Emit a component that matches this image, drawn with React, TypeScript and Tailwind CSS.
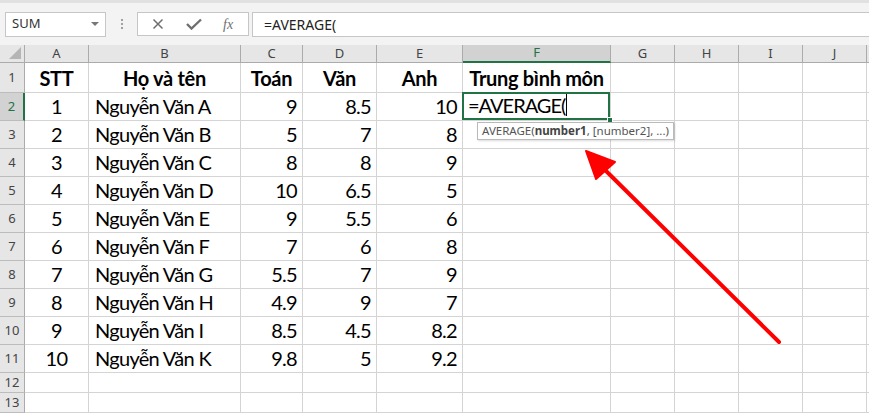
import React from "react";

const cols = ["A", "B", "C", "D", "E", "F", "G", "H", "I", "J"];
const widths = [64, 152, 62, 74, 86, 148, 64, 64, 64, 64];

const rows: (string | number)[][] = [
  [1, "Nguyễn Văn A", 9, 8.5, 10],
  [2, "Nguyễn Văn B", 5, 7, 8],
  [3, "Nguyễn Văn C", 8, 8, 9],
  [4, "Nguyễn Văn D", 10, 6.5, 5],
  [5, "Nguyễn Văn E", 9, 5.5, 6],
  [6, "Nguyễn Văn F", 7, 6, 8],
  [7, "Nguyễn Văn G", 5.5, 7, 9],
  [8, "Nguyễn Văn H", 4.9, 9, 7],
  [9, "Nguyễn Văn I", 8.5, 4.5, 8.2],
  [10, "Nguyễn Văn K", 9.8, 5, 9.2],
];

const uiFont = "font-['Noto_Sans','Open_Sans',sans-serif]";
const cellFont = "font-['Lato','Noto_Sans',sans-serif]";

// one ordinary grid cell
const Cell = ({
  children,
  align = "left",
  bold = false,
}: {
  children?: React.ReactNode;
  align?: "left" | "center" | "right";
  bold?: boolean;
}) => {
  const justify =
    align === "center"
      ? "justify-center"
      : align === "right"
      ? "justify-end pr-[5px]"
      : "justify-start pl-[6px]";
  return (
    <div
      className={`flex items-end pb-[2px] border-r border-b border-[#d4d4d4] text-[20px] leading-[24px] text-black whitespace-nowrap overflow-visible ${justify} ${
        bold ? "font-bold tracking-[-0.3px]" : "tracking-[-0.7px]"
      }`}
    >
      {children}
    </div>
  );
};

const RowHead = ({ n, active = false }: { n: number; active?: boolean }) => (
  <div
    className={`flex items-center justify-center border-b border-[#bcbcbc] text-[13px] ${uiFont} ${
      active
        ? "bg-[#d2d2d2] text-[#217346] border-r-2 border-r-[#217346]"
        : "bg-[#e6e6e6] text-[#444] border-r border-r-[#ababab]"
    }`}
  >
    {n}
  </div>
);

export default function App() {
  const template = `25px ${widths.map((w) => `${w}px`).join(" ")} 1fr`;
  return (
    <div className={`relative w-[869px] h-[414px] overflow-hidden bg-white ${cellFont}`}>
      {/* formula bar */}
      <div className="h-[45px] bg-[#f3f3f3] border-t-[3px] border-[#e1e1e1] flex items-center">
        <div className="ml-[5px] w-[101px] h-[25px] bg-white border border-[#c6c6c6] flex items-center justify-between px-[6px]">
          <span className={`text-[13px] text-[#333] ${uiFont}`}>SUM</span>
          <svg width="8" height="5" viewBox="0 0 8 5">
            <path d="M0 0 L8 0 L4 4 Z" fill="#777" />
          </svg>
        </div>
        <div className="w-[31px] flex flex-col items-center gap-[2px]">
          <span className="w-[2px] h-[2px] bg-[#a0a0a0]" />
          <span className="w-[2px] h-[2px] bg-[#a0a0a0]" />
          <span className="w-[2px] h-[2px] bg-[#a0a0a0]" />
        </div>
        <div className="w-[112px] h-[24px] bg-white border border-[#c6c6c6] flex items-center pl-[14px]">
          <svg width="12" height="12" viewBox="0 0 12 12">
            <path d="M1.5 1.5 L10.5 10.5 M10.5 1.5 L1.5 10.5" stroke="#6f6f6f" strokeWidth="1.5" />
          </svg>
          <svg width="16" height="12" viewBox="0 0 16 12" className="ml-[22px]">
            <path d="M1 6 L5.5 10.5 L15 1.5" stroke="#6f6f6f" strokeWidth="2.4" fill="none" />
          </svg>
          <span className="ml-[21px] text-[14px] italic text-[#6f6f6f] font-['Liberation_Serif',serif]">
            fx
          </span>
        </div>
        <div className="ml-[3px] flex-1 h-[25px] bg-white border-y border-l border-[#c6c6c6] flex items-center pl-[11px]">
          <span className={`text-[14px] text-[#222] ${uiFont}`}>=AVERAGE(</span>
        </div>
      </div>

      {/* sheet grid */}
      <div
        className="grid"
        style={{
          gridTemplateColumns: template,
          gridTemplateRows: "18px 30px repeat(10, 28px) 20px 20px",
        }}
      >
        <div className="bg-[#e6e6e6] border-r border-b border-[#ababab] flex items-end justify-end pr-[3px] pb-[3px]">
          <svg width="12" height="12" viewBox="0 0 12 12">
            <path d="M12 0 L12 12 L0 12 Z" fill="#b5b5b5" />
          </svg>
        </div>
        {cols.map((c) => (
          <div
            key={c}
            className={`flex items-center justify-center text-[13px] ${uiFont} border-r border-[#ababab] ${
              c === "F"
                ? "bg-[#d2d2d2] text-[#217346] border-b-2 border-b-[#217346]"
                : "bg-[#e6e6e6] text-[#444] border-b border-b-[#ababab]"
            }`}
          >
            {c}
          </div>
        ))}
        <div className="bg-[#e6e6e6] border-b border-[#ababab]" />

        {/* row 1 */}
        <RowHead n={1} />
        <Cell align="center" bold>STT</Cell>
        <Cell align="center" bold>Họ và tên</Cell>
        <Cell align="center" bold>Toán</Cell>
        <Cell align="center" bold>Văn</Cell>
        <Cell align="center" bold>Anh</Cell>
        <Cell align="center" bold>Trung bình môn</Cell>
        <Cell />
        <Cell />
        <Cell />
        <Cell />
        <Cell />

        {rows.map((r, i) => (
          <React.Fragment key={i}>
            <RowHead n={i + 2} active={i === 0} />
            <Cell align="center">{r[0]}</Cell>
            <Cell>{r[1]}</Cell>
            <Cell align="right">{r[2]}</Cell>
            <Cell align="right">{r[3]}</Cell>
            <Cell align="right">{r[4]}</Cell>
            {i === 0 ? (
              <div className="relative border-b border-r border-[#d4d4d4]">
                <div className="absolute -left-[1px] -top-[1px] right-0 bottom-0 border-2 border-[#217346] flex items-end pl-[4px] pb-[1px] text-[20px] leading-[24px] tracking-[-1px]">
                  =AVERAGE(
                  <span className="ml-[1px] w-[1px] h-[22px] bg-black mb-[1px]" />
                </div>
                <div className="absolute -right-[3px] -bottom-[3px] w-[6px] h-[6px] bg-[#217346] border border-white" />
              </div>
            ) : (
              <Cell />
            )}
            <Cell />
            <Cell />
            <Cell />
            <Cell />
            <Cell />
          </React.Fragment>
        ))}

        {[12, 13].map((n) => (
          <React.Fragment key={n}>
            <RowHead n={n} />
            {cols.map((c) => (
              <Cell key={c} />
            ))}
            <Cell />
          </React.Fragment>
        ))}
      </div>

      {/* function tooltip */}
      <div
        className={`absolute left-[477px] top-[122px] h-[18px] px-[4px] flex items-center bg-white border border-[#bababa] shadow-[1px_1px_2px_rgba(0,0,0,0.15)] text-[11.5px] text-[#555] ${uiFont}`}
      >
        AVERAGE(<b className="text-[#444]">number1</b>, [number2], ...)
      </div>

      {/* red arrow */}
      <svg className="absolute left-0 top-0 pointer-events-none" width="869" height="414">
        <line x1="779" y1="342" x2="600" y2="165" stroke="#ff0000" strokeWidth="4" strokeLinecap="round" />
        <polygon points="586,151 615,162 596,179" fill="#ff0000" stroke="#ff0000" strokeWidth="2" strokeLinejoin="round" />
      </svg>
    </div>
  );
}
